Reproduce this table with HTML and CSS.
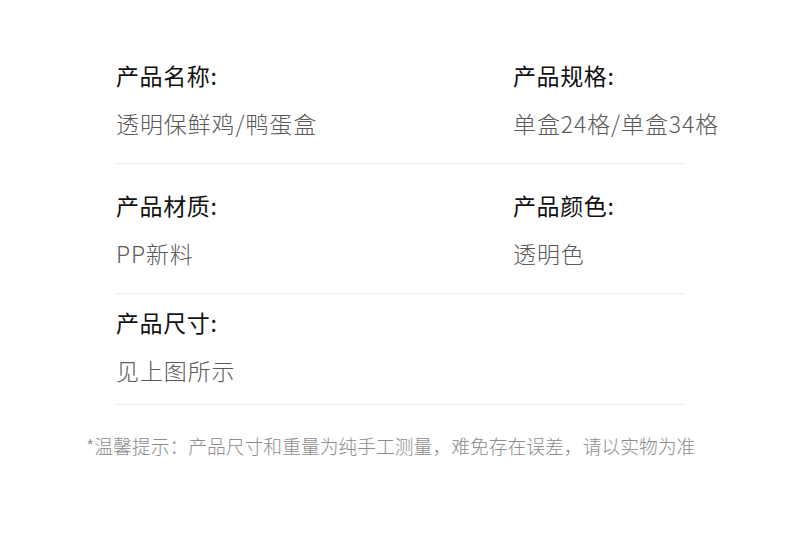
FILE: index.html
```html
<!DOCTYPE html>
<html lang="zh-CN">
<head>
<meta charset="utf-8">
<link rel="stylesheet" href="styles.css">
</head>
<body>
<div class="page">
  <div class="spec">
    <div class="row row-1">
      <div class="cell">
        <div class="label">产品名称:</div>
        <div class="value">透明保鲜鸡/鸭蛋盒</div>
      </div>
      <div class="cell">
        <div class="label">产品规格:</div>
        <div class="value">单盒24格/单盒34格</div>
      </div>
    </div>
    <div class="row row-2">
      <div class="cell">
        <div class="label">产品材质:</div>
        <div class="value">PP新料</div>
      </div>
      <div class="cell">
        <div class="label">产品颜色:</div>
        <div class="value">透明色</div>
      </div>
    </div>
    <div class="row row-3">
      <div class="cell">
        <div class="label">产品尺寸:</div>
        <div class="value">见上图所示</div>
      </div>
    </div>
  </div>
  <p class="note">*温馨提示：产品尺寸和重量为纯手工测量，难免存在误差，请以实物为准</p>
</div>
</body>
</html>
```
FILE: styles.css
```css
html, body {
  margin: 0;
  padding: 0;
  background: #ffffff;
}
body {
  font-family: "Noto Sans CJK SC", "Noto Sans", sans-serif;
  width: 790px;
  height: 541px;
  overflow: hidden;
}
.page {
  padding-top: 61px;
}
.spec {
  margin-left: 116px;
  width: 568px;
}
.row {
  display: grid;
  grid-template-columns: 397px 1fr;
  border-bottom: 1px solid #ececec;
}
.row-1 { padding-bottom: 26px; }
.row-2 { padding-top: 27px; padding-bottom: 26px; }
.row-3 { padding-top: 14px; padding-bottom: 20px; }
.cell {
  display: flex;
  flex-direction: column;
  gap: 20px;
}
.label {
  font-size: 23px;
  line-height: 28px;
  letter-spacing: 0.6px;
  color: #111111;
  white-space: nowrap;
}
.value {
  font-size: 23px;
  line-height: 28px;
  letter-spacing: 0.9px;
  font-weight: 300;
  color: #5a5a5a;
  white-space: nowrap;
}
.note {
  margin: 27px 0 0 86px;
  font-size: 18.8px;
  line-height: 28px;
  font-weight: 300;
  color: #8c8c8c;
  white-space: nowrap;
}
```
